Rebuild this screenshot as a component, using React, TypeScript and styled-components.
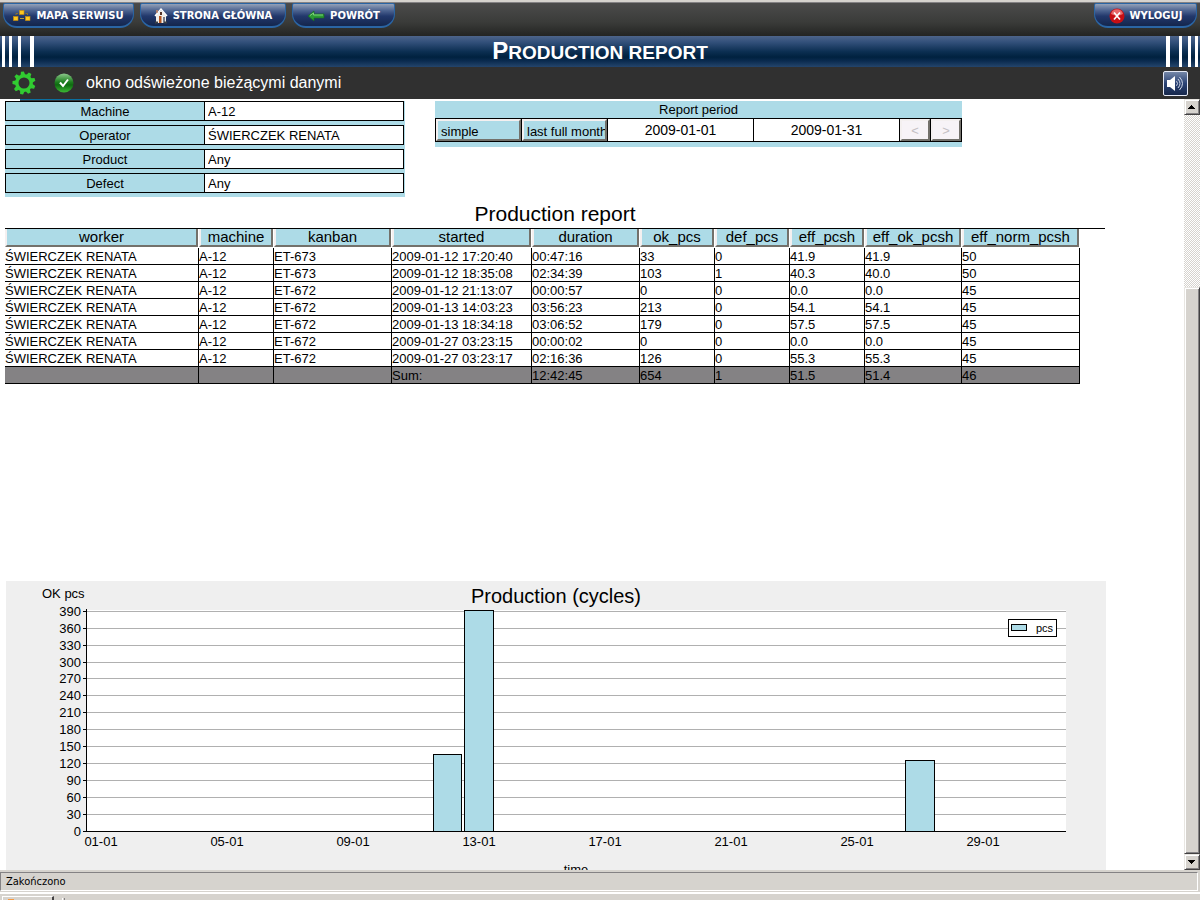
import React from "react";
import styled, { createGlobalStyle, css } from "styled-components";

const sky = "#addbe7";
const chrome = "#d6d3ce";

const GlobalStyle = createGlobalStyle`
  *, *::before, *::after { box-sizing: border-box; }
  body {
    margin: 0;
    background: #fff;
    color: #000;
    font-family: "Liberation Sans", Arial, sans-serif;
    font-size: 13px;
  }
  button, input, select { font: inherit; color: inherit; margin: 0; border-radius: 0; }
`;

const Shell = styled.div`
  display: flex;
  flex-direction: column;
  height: 100vh;
  overflow: hidden;
`;

const TopBar = styled.nav`
  display: flex;
  gap: 6px;
  height: 36px;
  flex: none;
  padding: 0 3px;
  border-top: 2px solid ${chrome};
  box-shadow: inset 0 1px #848284;
  background: linear-gradient(#4c4c4c, #3a3b39 60%, #232422);
`;

const NavButton = styled.button<{ $width: number; $end?: boolean }>`
  display: flex;
  align-items: center;
  justify-content: center;
  gap: 5px;
  min-width: ${(p) => p.$width}px;
  height: 25px;
  margin-top: 1px;
  margin-left: ${(p) => (p.$end ? "auto" : "0")};
  padding: 2px 8px 0;
  border: 1px solid #2a65a4;
  border-bottom-width: 2px;
  border-radius: 2px 2px 14px 14px;
  background: linear-gradient(#93a1b8, #4c6390 30%, #22386c 55%, #14264c);
  color: #fff;
  font: bold 10px/20px "DejaVu Sans", Verdana, sans-serif;
  white-space: nowrap;
`;

const Banner = styled.header`
  display: flex;
  align-items: stretch;
  justify-content: space-between;
  flex: none;
  height: 31px;
  background: linear-gradient(#4d648a, #32507a 20%, #0c2f52 50%, #00213f 68%, #0a2a4e 80%, #24456c);
`;

const Stripes = styled.div<{ $flip?: boolean }>`
  display: flex;
  flex-direction: ${(p) => (p.$flip ? "row-reverse" : "row")};
  width: 34px;
  margin: 0 2px;
  flex: none;
  justify-content: flex-start;
`;

const Stripe = styled.i<{ $after: number; $wide?: boolean }>`
  width: ${(p) => (p.$wide ? 4 : 3)}px;
  background: #fff;
  margin: ${(p) => `0 ${p.$after}px 0 0`};
  ${Stripes}[data-side="right"] & {
    margin: ${(p) => `0 0 0 ${p.$after}px`};
  }
`;

const PageTitle = styled.h1`
  margin: 0;
  color: #fff;
  font-size: 19px;
  line-height: 29px;
  text-transform: uppercase;
  &::first-letter { font-size: 24px; }
`;

const MessageBar = styled.div`
  display: flex;
  align-items: center;
  flex: none;
  height: 32px;
  padding: 0 12px;
  gap: 18px;
  background: #303030;
  color: #fff;
`;

const Message = styled.p`
  margin: 0;
  font-size: 16px;
  line-height: 32px;
`;

const MessageLead = styled.div`
  display: flex;
  align-items: center;
  flex: 1;
  gap: 12px;
`;

const SoundButton = styled.button`
  display: flex;
  align-items: center;
  justify-content: center;
  width: 25px;
  height: 25px;
  padding: 0;
  border: 1px solid #e4e8f4;
  border-radius: 2px;
  background: linear-gradient(#7587a8, #2a4274 50%, #17284c);
`;

const Viewport = styled.div`
  display: flex;
  flex: 1;
  min-height: 0;
`;

const Content = styled.main`
  flex: 1;
  min-width: 0;
  overflow: hidden;
  padding-left: 5px;
`;

const CutTab = styled.div`
  width: 70px;
  height: 2px;
  margin-left: 15px;
  background: #0b6f9f;
  border-bottom: 1px solid #30363c;
`;

const Parameters = styled.div`
  display: flex;
  align-items: flex-start;
  gap: 30px;
`;

const Filters = styled.div`
  display: grid;
  gap: 4px;
  width: 400px;
  padding: 0 1px 4px 0;
  background: ${sky};
`;

const Filter = styled.div`
  display: grid;
  grid-template-columns: 198px 1fr;
  height: 20px;
  border: 1px solid #000;
`;

const FilterLabel = styled.label`
  text-align: center;
  line-height: 20px;
`;

const FilterInput = styled.input`
  min-width: 0;
  width: 100%;
  height: 18px;
  padding: 0 3px;
  border: 0;
  border-left: 1px solid #000;
  background: #fff;
`;

const Period = styled.fieldset`
  width: 527px;
  margin: 0;
  padding: 0 0 5px;
  border: 0;
  background: ${sky};
`;

const PeriodCaption = styled.div`
  text-align: center;
  line-height: 17px;
`;

const PeriodRow = styled.div`
  display: grid;
  grid-template-columns: 85px 85px 145px 145px 30px 30px;
  gap: 1px;
  height: 24px;
  border: 1px solid #000;
  background: #000;
`;

const raised = css`
  border: 2px solid;
  border-color: #f4f0f0 #73716b #73716b #f4f0f0;
`;

const PeriodSelect = styled.select`
  ${raised}
  appearance: none;
  min-width: 0;
  padding: 2px 0 0 3px;
  overflow: hidden;
  background: ${sky};
  text-overflow: clip;
`;

const DateInput = styled.input`
  min-width: 0;
  padding: 0;
  border: 0;
  background: #fff;
  font-size: 14px;
  text-align: center;
`;

const StepButton = styled.button`
  ${raised}
  padding: 0;
  background: #f7f3f7;
  color: #c4c0c4;
`;

const Report = styled.section`
  max-width: 1100px;
  min-height: 384px;
`;

const ReportTitle = styled.h2`
  margin: 0;
  padding: 4px 0 2px;
  border-bottom: 1px solid #000;
  font-size: 21px;
  font-weight: normal;
  line-height: 25px;
  text-align: center;
`;

const Grid = styled.table`
  table-layout: fixed;
  width: 1075px;
  border-collapse: separate;
  border-spacing: 0;
`;

const HeadCell = styled.th`
  height: 19px;
  padding: 0 1px 1px 0;
  font-weight: normal;
`;

const SortButton = styled.button`
  ${raised}
  border-top: 0;
  display: block;
  width: 100%;
  height: 18px;
  padding: 0;
  background: ${sky};
  font-size: 15px;
  line-height: 16px;
  text-align: center;
`;

const Cell = styled.td`
  height: 17px;
  padding: 2px 0 0;
  border-right: 1px solid #000;
  border-bottom: 1px solid #000;
  line-height: 14px;
  white-space: nowrap;
`;

const SumRow = styled.tr`
  background: #848284;
`;

const Chart = styled.figure`
  max-width: 1100px;
  margin: 0 0 0 1px;
  background: #efefef;
  svg { display: block; }
`;

const Scrollbar = styled.div`
  display: flex;
  flex-direction: column;
  flex: none;
  width: 16px;
  background: repeating-conic-gradient(#fff 0 25%, ${chrome} 0 50%) 0 0 / 2px 2px;
`;

const bevel = css`
  border: 1px solid;
  border-color: #e8e6e2 #424142 #424142 #e8e6e2;
  box-shadow: inset 1px 1px #fff, inset -1px -1px #848284;
  background: ${chrome};
`;

const ScrollButton = styled.button`
  ${bevel}
  display: flex;
  align-items: center;
  justify-content: center;
  flex: none;
  width: 16px;
  height: 16px;
  padding: 0;
`;

const Track = styled.div`
  display: grid;
  grid-template-rows: 172fr 567fr;
  flex: 1;
`;

const Thumb = styled.div`
  ${bevel}
  grid-row: 2;
`;

const StatusBar = styled.footer`
  flex: none;
  height: 23px;
  padding: 2px 2px 2px 0;
  border-bottom: 1px solid #fff;
  background: ${chrome};
`;

const StatusText = styled.div`
  height: 19px;
  padding-left: 5px;
  border: 1px solid;
  border-color: #848284 #fff #fff #848284;
  font: 11px/18px "DejaVu Sans Condensed", Tahoma, sans-serif;
`;

const Taskbar = styled.div`
  display: flex;
  align-items: flex-end;
  flex: none;
  gap: 8px;
  height: 7px;
  padding: 0 2px;
  border-top: 1px solid #fff;
  background: ${chrome};
`;

const TaskButton = styled.div`
  width: 52px;
  height: 4px;
  padding: 2px 0 0 5px;
  border: solid;
  border-width: 1px 2px 0 1px;
  border-color: #fff #424142 #424142 #fff;
  &::before { content: ""; display: block; width: 6px; height: 1px; background: #f79a42; }
`;

const TaskGrip = styled.div`
  width: 3px;
  height: 2px;
  border-left: 1px solid #fff;
  border-right: 1px solid #848284;
`;

const SitemapIcon = () => (
  <svg width="18" height="12" viewBox="0 0 18 12" aria-hidden="true">
    <path d="M7 8.500h4" stroke="#b59a3a" />
    <g fill="#ffc81e" stroke="#c98d0c" strokeWidth=".6">
      <rect x="6.500" y=".5" width="4.500" height="4" />
      <rect x=".5" y="6.500" width="4.500" height="4" />
      <rect x="12.500" y="6.500" width="4.500" height="4" />
    </g>
    <path d="M3 5V3.500h2M12.500 3.500h2V5" fill="none" stroke="#8a7430" />
  </svg>
);

const HomeIcon = () => (
  <svg width="14" height="16" viewBox="0 0 14 16" aria-hidden="true">
    <path d="M2 7l5-5 5 5v8H2z" fill="#f2efea" />
    <path d="M5 15V8h2.500v7z" fill="#b5541f" />
    <path d="M9 9h2v6H9z" fill="#777c88" />
    <path d="M6 4h2v3H6z" fill="#55342a" />
    <path d="M1 8L7 1l6 7" fill="none" stroke="#fff" strokeWidth="1.400" />
    <path d="M3 5V2" stroke="#d08a62" strokeWidth="1.400" />
    <path d="M1 14.500h3M10 14.500h3" stroke="#3c4048" strokeWidth="2" />
  </svg>
);

const BackIcon = () => (
  <svg width="18" height="12" viewBox="0 0 18 12" aria-hidden="true">
    <path d="M1 6l6-5v3h10v4H7v3z" fill="#2b9b35" stroke="#176a22" strokeWidth=".7" />
    <path d="M3 5.500L6.500 3v2H16" fill="none" stroke="#7ed07c" />
  </svg>
);

const LogoutIcon = () => (
  <svg width="16" height="16" viewBox="0 0 16 16" aria-hidden="true">
    <circle cx="8" cy="8" r="7.500" fill="#c60f14" />
    <path d="M2 6a6.200 6.200 0 0 1 12 0q-6 3-12 0z" fill="#e8686a" />
    <path d="M5 4.500l6 7M11 4.500l-6 7" stroke="#fff" strokeWidth="1.700" />
  </svg>
);

const GearIcon = () => (
  <svg width="24" height="24" viewBox="-12 -12 24 24" aria-hidden="true">
    <circle r="7.200" fill="none" stroke="#31cb31" strokeWidth="3.400" />
    {[0, 40, 80, 120, 160, 200, 240, 280, 320].map((a) => (
      <path key={a} d="M-2.300-8L-1.500-11.500h3L2.300-8z" fill="#31cb31" transform={`rotate(${a - 8})`} />
    ))}
  </svg>
);

const CheckIcon = () => (
  <svg width="20" height="20" viewBox="0 0 20 20" aria-hidden="true">
    <defs>
      <linearGradient id="ok" x1="0" y1="0" x2="0" y2="1">
        <stop offset="0" stopColor="#8cc88c" />
        <stop offset=".45" stopColor="#1d7f1f" />
        <stop offset=".6" stopColor="#0d6b10" />
        <stop offset="1" stopColor="#3dbb35" />
      </linearGradient>
    </defs>
    <circle cx="10" cy="10" r="9.500" fill="url(#ok)" />
    <path d="M6 9.500l3 3.500 5-6.500" fill="none" stroke="#fff" strokeWidth="2" />
  </svg>
);

const SpeakerIcon = () => (
  <svg width="19" height="17" viewBox="0 0 19 17" aria-hidden="true">
    <path d="M1 5h3l5-4v15l-5-4H1z" fill="#fff" />
    <path d="M10.500 6.200q2 2.300 0 4.600M12 4q4 4.500 0 9M13.500 2q6 6.500 0 13" fill="none" stroke="#cfd6e6" />
  </svg>
);

const Arrow = ({ down }: { down?: boolean }) => (
  <svg width="8" height="4" viewBox="0 0 8 4" aria-hidden="true" shapeRendering="crispEdges">
    <path d={down ? "M0 0h7L3.500 4z" : "M0 4h7L3.500 0z"} />
  </svg>
);

const filters = [
  ["Machine", "A-12"],
  ["Operator", "ŚWIERCZEK RENATA"],
  ["Product", "Any"],
  ["Defect", "Any"],
];

const columns: [string, number][] = [
  ["worker", 194],
  ["machine", 75],
  ["kanban", 118],
  ["started", 140],
  ["duration", 108],
  ["ok_pcs", 75],
  ["def_pcs", 75],
  ["eff_pcsh", 75],
  ["eff_ok_pcsh", 97],
  ["eff_norm_pcsh", 118],
];

const worker = "ŚWIERCZEK RENATA";
const rows = [
  [worker, "A-12", "ET-673", "2009-01-12 17:20:40", "00:47:16", "33", "0", "41.9", "41.9", "50"],
  [worker, "A-12", "ET-673", "2009-01-12 18:35:08", "02:34:39", "103", "1", "40.3", "40.0", "50"],
  [worker, "A-12", "ET-672", "2009-01-12 21:13:07", "00:00:57", "0", "0", "0.0", "0.0", "45"],
  [worker, "A-12", "ET-672", "2009-01-13 14:03:23", "03:56:23", "213", "0", "54.1", "54.1", "45"],
  [worker, "A-12", "ET-672", "2009-01-13 18:34:18", "03:06:52", "179", "0", "57.5", "57.5", "45"],
  [worker, "A-12", "ET-672", "2009-01-27 03:23:15", "00:00:02", "0", "0", "0.0", "0.0", "45"],
  [worker, "A-12", "ET-672", "2009-01-27 03:23:17", "02:16:36", "126", "0", "55.3", "55.3", "45"],
];
const totals = ["", "", "", "Sum:", "12:42:45", "654", "1", "51.5", "51.4", "46"];

const baseY = 250;
const tickY = (v: number) => baseY - Math.floor((v * 220) / 390 + 0.7);
const ticks = Array.from({ length: 14 }, (_, i) => i * 30);
const days = ["01-01", "05-01", "09-01", "13-01", "17-01", "21-01", "25-01", "29-01"];
const bars = [
  { x: 427, width: 28, top: 173 },
  { x: 458, width: 29, top: 29 },
  { x: 899, width: 29, top: 179 },
];

const ProductionChart = () => (
  <svg width="1100" height="320" fontSize="13" role="img" aria-label="Production (cycles)">
    <rect x="80" y="29" width="980" height="221" fill="#fff" />
    <g shapeRendering="crispEdges" stroke="#000">
      {ticks.map((v) => (
        <React.Fragment key={v}>
          <line x1="80" x2="1060" y1={tickY(v) + 0.5} y2={tickY(v) + 0.5} stroke={v ? "#b0b0b0" : "#000"} />
          <line x1="77" x2="80" y1={tickY(v) + 0.5} y2={tickY(v) + 0.5} />
        </React.Fragment>
      ))}
      <line x1="80.5" x2="80.5" y1="28" y2="251" />
      {bars.map((b) => (
        <rect key={b.x} x={b.x + 0.5} y={b.top + 0.5} width={b.width} height={baseY - b.top} fill={sky} />
      ))}
      <rect x="1002.5" y="38.5" width="48" height="17" fill="#fff" />
      <rect x="1005.5" y="43.5" width="15" height="6" fill={sky} />
    </g>
    {ticks.map((v) => (
      <text key={v} x="75" y={tickY(v) + 5} textAnchor="end">{v}</text>
    ))}
    {days.map((d, i) => (
      <text key={d} x={95 + i * 126} y="265" textAnchor="middle">{d}</text>
    ))}
    <text x="36" y="17">OK pcs</text>
    <text x="550" y="22" fontSize="20" textAnchor="middle">Production (cycles)</text>
    <text x="570" y="293" textAnchor="middle">time</text>
    <text x="1030" y="51" fontSize="11">pcs</text>
  </svg>
);

const Bars = ({ side }: { side: "left" | "right" }) => (
  <Stripes $flip={side === "right"} data-side={side} aria-hidden="true">
    <Stripe $after={4} />
    <Stripe $after={6} />
    <Stripe $after={9} />
    <Stripe $after={0} $wide />
  </Stripes>
);

export default function App() {
  return (
    <Shell>
      <GlobalStyle />
      <TopBar>
        <NavButton $width={131}><SitemapIcon />MAPA SERWISU</NavButton>
        <NavButton $width={146}><HomeIcon />STRONA GŁÓWNA</NavButton>
        <NavButton $width={103}><BackIcon />POWRÓT</NavButton>
        <NavButton $width={103} $end><LogoutIcon />WYLOGUJ</NavButton>
      </TopBar>
      <Banner>
        <Bars side="left" />
        <PageTitle>Production report</PageTitle>
        <Bars side="right" />
      </Banner>
      <MessageBar>
        <GearIcon />
        <MessageLead>
          <CheckIcon />
          <Message>okno odświeżone bieżącymi danymi</Message>
        </MessageLead>
        <SoundButton aria-label="Dźwięk"><SpeakerIcon /></SoundButton>
      </MessageBar>
      <Viewport>
        <Content>
          <CutTab />
          <Parameters>
            <Filters>
              {filters.map(([name, value]) => (
                <Filter key={name}>
                  <FilterLabel htmlFor={name}>{name}</FilterLabel>
                  <FilterInput id={name} defaultValue={value} />
                </Filter>
              ))}
            </Filters>
            <Period aria-labelledby="period">
              <PeriodCaption id="period">Report period</PeriodCaption>
              <PeriodRow>
                <PeriodSelect aria-label="Mode"><option>simple</option></PeriodSelect>
                <PeriodSelect aria-label="Range"><option>last full month</option></PeriodSelect>
                <DateInput aria-label="From" defaultValue="2009-01-01" />
                <DateInput aria-label="To" defaultValue="2009-01-31" />
                <StepButton disabled>&lt;</StepButton>
                <StepButton disabled>&gt;</StepButton>
              </PeriodRow>
            </Period>
          </Parameters>
          <Report>
            <ReportTitle>Production report</ReportTitle>
            <Grid>
              <colgroup>
                {columns.map(([name, width]) => <col key={name} width={width} />)}
              </colgroup>
              <thead>
                <tr>
                  {columns.map(([name]) => (
                    <HeadCell key={name} scope="col"><SortButton>{name}</SortButton></HeadCell>
                  ))}
                </tr>
              </thead>
              <tbody>
                {rows.map((row) => (
                  <tr key={row[3]}>
                    {row.map((value, i) => <Cell key={i}>{value}</Cell>)}
                  </tr>
                ))}
              </tbody>
              <tfoot>
                <SumRow>
                  {totals.map((value, i) => <Cell key={i}>{value}</Cell>)}
                </SumRow>
              </tfoot>
            </Grid>
          </Report>
          <Chart><ProductionChart /></Chart>
        </Content>
        <Scrollbar>
          <ScrollButton aria-label="Scroll up"><Arrow /></ScrollButton>
          <Track><Thumb /></Track>
          <ScrollButton aria-label="Scroll down"><Arrow down /></ScrollButton>
        </Scrollbar>
      </Viewport>
      <StatusBar><StatusText>Zakończono</StatusText></StatusBar>
      <Taskbar><TaskButton /><TaskGrip /></Taskbar>
    </Shell>
  );
}
